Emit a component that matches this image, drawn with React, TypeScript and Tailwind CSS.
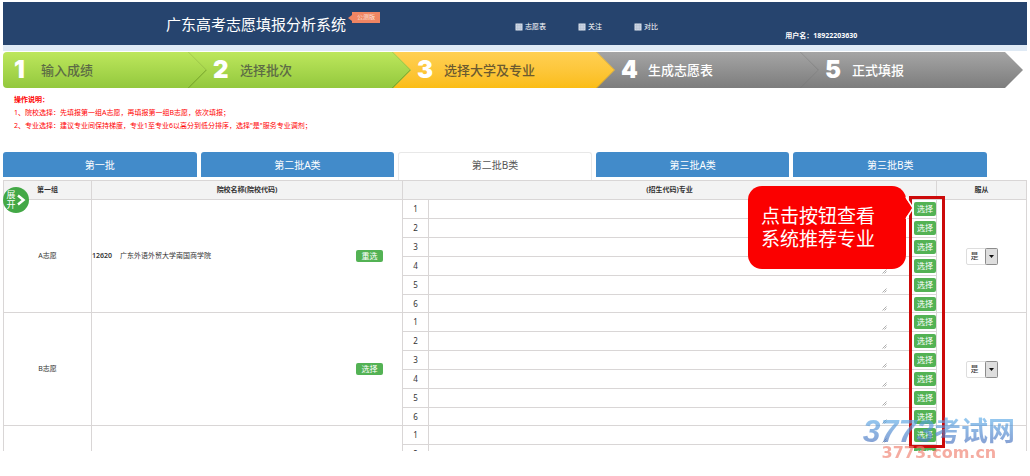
import { useState } from 'react';
import clsx from 'clsx';

const STEPS = [
  { title: '输入成绩', state: 'done' },
  { title: '选择批次', state: 'done' },
  { title: '选择大学及专业', state: 'current' },
  { title: '生成志愿表', state: 'todo' },
  { title: '正式填报', state: 'todo' },
];

const TABS = ['第一批', '第二批A类', '第二批B类', '第三批A类', '第三批B类'];

const NAV = ['志愿表', '关注', '对比'];

const GROUPS = [
  { id: 'a', label: 'A志愿', code: '12620', school: '广东外语外贸大学南国商学院', action: '重选', majors: [1, 2, 3, 4, 5, 6] },
  { id: 'b', label: 'B志愿', code: '', school: '', action: '选择', majors: [1, 2, 3, 4, 5, 6] },
  { id: 'c', label: '', code: '', school: '', action: '', majors: [1, 2] },
];

function GridIcon() {
  return (
    <svg viewBox="0 0 8 8" className="h-2 w-2" aria-hidden="true">
      <rect x="0.5" y="0.5" width="7" height="7" fill="#d5dde8" />
      <path d="M0.5 2.8h7M0.5 5.2h7M2.8 0.5v7M5.2 0.5v7" stroke="#a3b3c9" strokeWidth="0.5" />
    </svg>
  );
}

function Header() {
  return (
    <header className="grid h-[49px] grid-cols-[50%_26%_24%] border-b-[6px] border-[#dfeaf5] bg-[#26446e] text-white">
      <div className="flex items-center justify-end pr-[135px]">
        <h1 className="text-[15px] leading-5 whitespace-nowrap">广东高考志愿填报分析系统</h1>
        <span className="relative mb-3 ml-[6px] h-[11px] w-[28px] shrink-0 bg-[#ef8563] text-center text-[6px] leading-[11px] text-[#fde3d9]">
          <svg viewBox="0 0 4 6" className="absolute top-[3px] -left-1 h-[6px] w-1" aria-hidden="true">
            <path d="M4 0L0 3l4 3z" fill="#ef8563" />
          </svg>
          公测版
        </span>
      </div>
      <nav className="flex items-center gap-8 pt-[7px] text-[7px]">
        {NAV.map((item) => (
          <a key={item} href="#" className="flex items-center gap-[2px] whitespace-nowrap">
            <GridIcon />
            {item}
          </a>
        ))}
      </nav>
      <div className="self-end pb-[3px] pl-1 text-[7px] leading-[13px] font-bold whitespace-nowrap">用户名：18922203630</div>
    </header>
  );
}

function Steps() {
  return (
    <ol className="grid grid-cols-5 pt-px pr-1">
      {STEPS.map((step, i) => (
        <li
          key={step.title}
          className={clsx(
            'relative flex h-9 items-center bg-linear-to-b [clip-path:polygon(0_0,calc(100%-18px)_0,100%_50%,calc(100%-18px)_100%,0_100%)]',
            i === 0 ? 'z-50 rounded-l pl-[11px]' : '-ml-[18px] pl-6',
            i === 1 && 'z-40',
            i === 2 && 'z-30',
            i === 3 && 'z-20',
            i === 4 && 'z-10',
            step.state === 'done' && 'from-[#bde75c] to-[#93c83d] text-[#5c6b45]',
            step.state === 'current' && 'from-[#ffd052] to-[#fbbd13] text-[#6b5a30]',
            step.state === 'todo' && 'from-[#a5a5a5] to-[#7d7d7d] text-white',
          )}
        >
          <span className="w-[27px] font-[Inter,sans-serif] text-[24px] leading-6 font-black text-white">{i + 1}</span>
          <span className="text-[13px] leading-5 font-medium whitespace-nowrap">{step.title}</span>
          {i < 4 && (
            <svg viewBox="0 0 19 36" className="absolute top-0 right-0 h-9 w-[19px]" fill="none" aria-hidden="true">
              <path d="M0.5 0L18.5 18" stroke="#000" strokeOpacity="0.15" />
              <path d="M18.5 18L0.5 36" stroke={step.state === 'done' ? '#5f8a1c' : '#666'} strokeOpacity={step.state === 'done' ? 0.9 : 0.35} />
            </svg>
          )}
        </li>
      ))}
    </ol>
  );
}

function PickButton({ label, wide }: { label: string; wide?: boolean }) {
  return (
    <button
      type="button"
      className={clsx(
        'block rounded-[2px] bg-[#53b254] text-center text-[8px] text-white',
        wide ? 'h-3 w-[27px] leading-3' : 'ml-auto h-[14px] w-[22px] leading-[14px]',
      )}
    >
      {label}
    </button>
  );
}

function ObeySelect({ id }: { id: string }) {
  return (
    <div className="relative mx-auto flex w-8">
      <select
        aria-label={`服从 ${id}`}
        className="h-[17px] w-8 appearance-none rounded-[2px] border border-[#ddd] bg-white pl-1 text-[8px] leading-[14px] text-[#333]"
      >
        <option>是</option>
        <option>否</option>
      </select>
      <svg viewBox="0 0 13 17" className="pointer-events-none absolute top-0 right-0 h-[17px] w-[13px]" aria-hidden="true">
        <rect x="0.5" y="0.5" width="12" height="16" rx="1" fill="#dedede" stroke="#8c8c8c" />
        <path d="M4 7h5L6.5 10z" fill="#111" />
      </svg>
    </div>
  );
}

function VolunteerTable() {
  return (
    <table className="w-full table-fixed border-collapse text-[7px] leading-[14px] text-[#333]">
      <colgroup>
        <col className="w-[88px]" />
        <col className="w-[311px]" />
        <col className="w-[26px]" />
        <col />
        <col className="w-[26px]" />
        <col className="w-[90px]" />
      </colgroup>
      <thead>
        <tr className="h-[19px] bg-[#f3f3f3] [&>th]:border [&>th]:border-[#d9d6d6] [&>th]:p-0 [&>th]:font-bold">
          <th>第一组</th>
          <th>院校名称(院校代码)</th>
          <th colSpan={3}>(招生代码)专业</th>
          <th>服从</th>
        </tr>
      </thead>
      <tbody>
        {GROUPS.map((group) =>
          group.majors.map((n) => (
            <tr key={group.id + n} className={clsx('[&>td]:border-[#d9d6d6] [&>td]:p-0', n === 6 ? 'h-[18px]' : 'h-[19px]')}>
              {n === 1 && (
                <>
                  <td rowSpan={group.majors.length} className="border text-center">
                    {group.label}
                  </td>
                  <td rowSpan={group.majors.length} className="border">
                    <div className="flex items-center justify-between pr-[19px]">
                      <span className="flex gap-2">
                        <b className="font-semibold">{group.code}</b>
                        {group.school}
                      </span>
                      {group.action && <PickButton label={group.action} wide />}
                    </div>
                  </td>
                </>
              )}
              <td className="border text-center text-[8px]">{n}</td>
              <td className="border-y border-l">
                <div className="flex h-[17px] items-end pr-[23px] pb-px">
                  <textarea aria-label={`${group.label}专业${n}`} className="h-[14px] min-w-0 flex-1 resize-none overflow-hidden outline-none" />
                  <svg viewBox="0 0 5 5" className="h-[5px] w-[5px]" aria-hidden="true">
                    <path d="M0.5 4.5L4.5 0.5M2.5 4.5L4.5 2.5" stroke="#999" strokeWidth="0.8" />
                  </svg>
                </div>
              </td>
              <td className="border-y border-r">
                <PickButton label="选择" />
              </td>
              {n === 1 && (
                <td rowSpan={group.majors.length} className="border">
                  {group.label && <ObeySelect id={group.label} />}
                </td>
              )}
            </tr>
          )),
        )}
      </tbody>
    </table>
  );
}

function Callout() {
  return (
    <div className="absolute top-[6px] right-[121px] h-[83px] w-[158px] rounded-[14px] bg-[#fb0000] pt-[19px] pl-[13px] text-[19px] leading-[23px] text-white">
      <svg viewBox="0 0 10 26" className="absolute top-[9px] -right-2 h-[26px] w-[10px]" aria-hidden="true">
        <path d="M0 1L9 13L0 25z" fill="#fb0000" />
        <path d="M2 2L9 13L2 24" fill="none" stroke="#fff" strokeWidth="1.5" />
      </svg>
      点击按钮查看
      <br />
      系统推荐专业
    </div>
  );
}

function Watermark() {
  return (
    <div className="pointer-events-none absolute right-3 -bottom-2 flex flex-col items-center whitespace-nowrap opacity-65">
      <div className="flex items-center bg-linear-to-b from-[#5fb4ee] to-[#4468b8] bg-clip-text leading-8 font-bold text-transparent">
        <span className="font-['Liberation_Sans',sans-serif] text-[32px] italic">3773</span>
        <span className="text-[27px]">考试网</span>
      </div>
      <div className="font-['DejaVu_Sans',sans-serif] text-[16px] leading-3 font-bold text-[#f08070]">3773.com.cn</div>
    </div>
  );
}

export default function App() {
  const [active, setActive] = useState(2);

  return (
    <div className="bg-white px-[3px] pt-[2px] pb-6 font-['Noto_Sans','Noto_Sans_CJK_SC',sans-serif]">
      <Header />
      <Steps />

      <section className="mb-5 px-[11px] pt-[5px] text-[7px] leading-[13px] text-[#f00]">
        <h2 className="font-bold">操作说明：</h2>
        <p>1、院校选择：先填报第一组A志愿，再填报第一组B志愿，依次填报；</p>
        <p>2、专业选择：建议专业间保持梯度，专业1至专业6以高分到低分排序，选择"是"服务专业调剂；</p>
      </section>

      <div role="tablist" className="grid h-7 grid-cols-5 items-start gap-1 pr-10">
        {TABS.map((tab, i) => (
          <button
            key={tab}
            type="button"
            role="tab"
            aria-selected={i === active}
            onClick={() => setActive(i)}
            className={clsx(
              'rounded-t-[3px] text-[10px] leading-6',
              i === active ? 'h-7 border border-b-0 border-[#e8e8e8] bg-white pb-1 text-[#555]' : 'h-[25px] bg-[#428bca] text-white',
            )}
          >
            {tab}
          </button>
        ))}
      </div>

      <div className="relative">
        <div className="max-h-[271px] overflow-hidden">
          <VolunteerTable />
        </div>
        <button
          type="button"
          className="absolute top-[7px] left-0 flex h-[26px] w-[26px] items-center justify-center rounded-full bg-[#43a846] text-[9px] leading-[10px] text-white"
        >
          <span className="w-[9px]">展开</span>
          <svg viewBox="0 0 10 12" className="h-3 w-[10px]" fill="none" aria-hidden="true">
            <path d="M2 1.5L7.5 6L2 10.5" stroke="#fff" strokeWidth="2.5" />
          </svg>
        </button>
        <div className="pointer-events-none absolute top-4 right-[82px] h-[252px] w-9 border-[3px] border-[#cc0a0a]" />
        <Callout />
        <Watermark />
      </div>
    </div>
  );
}
